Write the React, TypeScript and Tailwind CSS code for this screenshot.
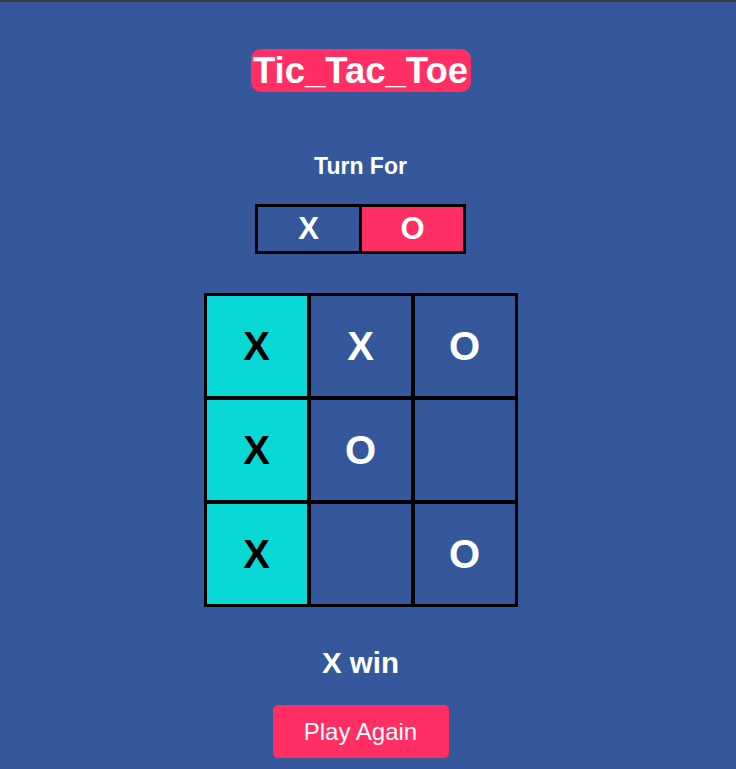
import React from "react";

type Cell = "X" | "O" | "";

const board: Cell[] = ["X", "X", "O", "X", "O", "", "X", "", "O"];
const winLine = [0, 3, 6];

function App() {
    return (
        <div className="min-h-screen w-full bg-[#35579c] font-['Liberation_Sans',Arial,sans-serif] text-white">
            <div className="h-[2px] w-full bg-[#3c3c3c]" />
            <div className="w-[721px] flex flex-col items-center">
                <h1 className="mt-[47px] w-[220px] h-[43px] rounded-[10px] bg-[#ff2e63] text-center text-[36.5px] leading-[43px] font-bold">
                    Tic_Tac_Toe
                </h1>

                <p className="mt-[63px] text-[23px] leading-[23px] font-bold">Turn For</p>

                <div className="mt-[26px] flex border-[3px] border-black">
                    <div className="w-[104px] h-[44px] flex items-center justify-center border-r-[3px] border-black text-[31px] font-bold">
                        X
                    </div>
                    <div className="w-[101px] h-[44px] flex items-center justify-center bg-[#ff2e63] text-[31px] font-bold">
                        O
                    </div>
                </div>

                <div className="mt-[39px] grid grid-cols-3 border border-black">
                    {board.map((value, i) => (
                        <div
                            key={i}
                            className={`w-[104px] h-[104px] border-2 border-black flex items-center justify-center text-[40px] font-bold ${
                                winLine.includes(i) ? "bg-[#08d9d6] text-black" : "text-white"
                            }`}
                        >
                            {value}
                        </div>
                    ))}
                </div>

                <p className="mt-[41px] text-[29.5px] leading-[30px] font-bold">X win</p>

                <button className="mt-[27px] w-[176px] h-[53px] rounded-[5px] bg-[#ff2e63] text-[24px] text-white">
                    Play Again
                </button>
            </div>
        </div>
    );
}

export default App;
